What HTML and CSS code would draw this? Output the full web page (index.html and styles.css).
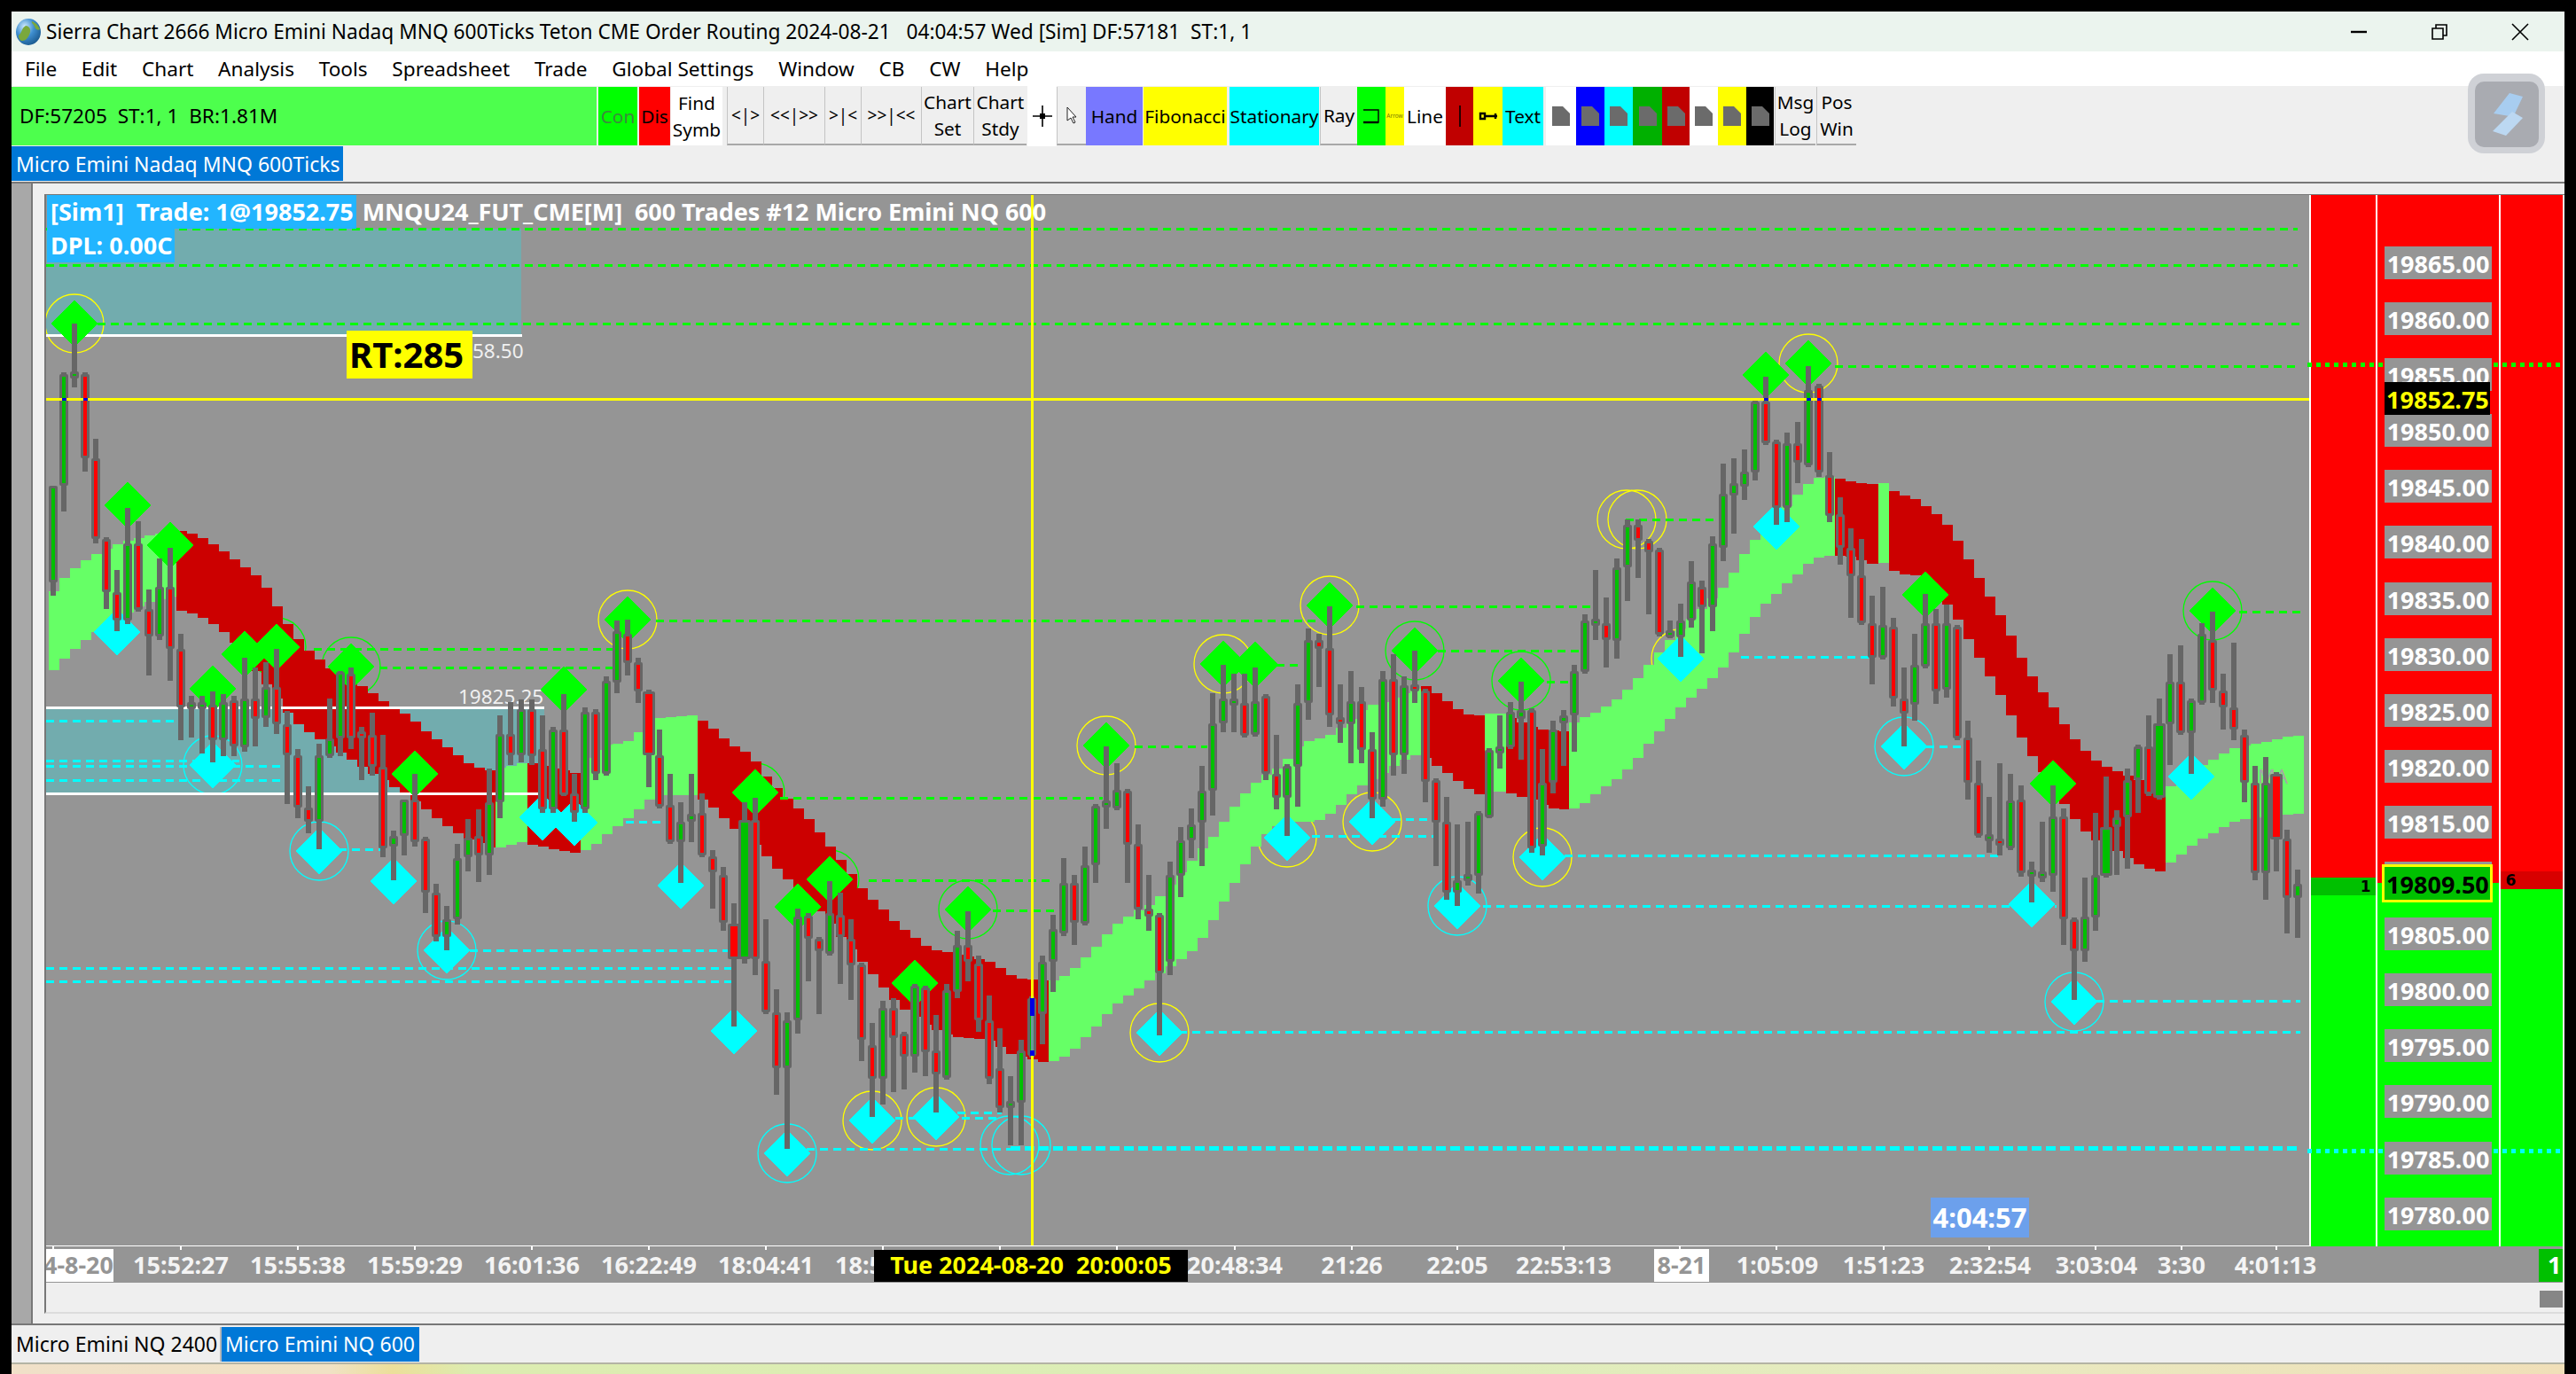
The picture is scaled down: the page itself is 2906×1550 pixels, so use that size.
FILE: index.html
```html
<!DOCTYPE html>
<html lang="en">
<head>
<meta charset="utf-8">
<title>Sierra Chart</title>
<link rel="stylesheet" href="styles.css">
</head>
<body>
<div class="app">
  <header class="title">
    <svg class="globe" viewBox="0 0 30 32"><defs><radialGradient id="gl" cx="35%" cy="30%" r="75%"><stop offset="0" stop-color="#cfeaff"/><stop offset=".5" stop-color="#3f8fd0"/><stop offset="1" stop-color="#1b5a90"/></radialGradient></defs><ellipse cx="15" cy="16" rx="14" ry="15" fill="url(#gl)"/><path d="M4 20c4-3 3-8 8-11 3 0 6 3 5 7-1 5-5 11-10 10-2-1-3-3-3-6zM19 4c3 1 7 4 9 9-2 2-5 0-6-3s-4-4-3-6z" fill="#7aa83c"/></svg>
    <span class="title-text">Sierra Chart 2666 Micro Emini Nadaq MNQ 600Ticks Teton CME Order Routing 2024-08-21   04:04:57 Wed [Sim] DF:57181  ST:1, 1</span>
    <div class="win">
      <svg class="win-ico" viewBox="0 0 20 20"><path d="M1 10h18" class="ink2"/></svg>
      <svg class="win-ico" viewBox="0 0 20 20"><path d="M2 6h12v12H2zM6 6V2h12v12h-4" class="ink1"/></svg>
      <svg class="win-ico" viewBox="0 0 20 20"><path d="M1 1l18 18M19 1L1 19" class="ink1"/></svg>
    </div>
  </header>

  <nav class="menu">
    <span>File</span><span>Edit</span><span>Chart</span><span>Analysis</span><span>Tools</span><span>Spreadsheet</span><span>Trade</span><span>Global Settings</span><span>Window</span><span>CB</span><span>CW</span><span>Help</span>
  </nav>

  <div class="toolbar">
    <div class="status">DF:57205  ST:1, 1  BR:1.81M</div>
    <div class="btn w44 ml2 green dim">Con</div>
    <div class="btn w35 ml2 red">Dis</div>
    <div class="btn w58 ml1 white two">Find<br>Symb</div>
    <div class="btn w41 ml5 bar nav">&lt;|&gt;</div>
    <div class="btn w69 bar nav">&lt;&lt;|&gt;&gt;</div>
    <div class="btn w41 bar nav">&gt;|&lt;</div>
    <div class="btn w68 bar nav">&gt;&gt;|&lt;&lt;</div>
    <div class="btn w59 bar two">Chart<br>Set</div>
    <div class="btn w60 bar two">Chart<br>Stdy</div>
    <div class="btn w33 ml1 white tall"><svg class="ico" viewBox="0 0 24 24"><path d="M12 0v24M1 12h22" class="ink1"/><rect x="9" y="9" width="6" height="6" class="fill-ink"/></svg></div>
    <div class="btn w33 bar"><svg class="ico-sm" viewBox="0 0 12 20"><path d="M1 1v15l4-3 3 6 2-1-3-6h4z" class="outline"/></svg></div>
    <div class="btn w64 violet">Hand</div>
    <div class="btn w94 ml1 yellow">Fibonacci</div>
    <div class="btn w101 ml3 cyan">Stationary</div>
    <div class="btn w42 ml1 bar">Ray</div>
    <div class="btn w32 green"><svg class="ico" viewBox="0 0 24 24"><path d="M3 5h17v14H3" class="ink1-open"/><path d="M3 19h17" class="ink2"/></svg></div>
    <div class="btn w21 yellow tiny">Arrow</div>
    <div class="btn w47 white">Line</div>
    <div class="btn w31 dred"><svg class="ico" viewBox="0 0 24 24"><path d="M12 0v24" class="ink1"/></svg></div>
    <div class="btn w33 yellow"><svg class="ico" viewBox="0 0 24 24"><path d="M8 12h14M3 9h5v6H3zM20 9v6" class="ink2"/></svg></div>
    <div class="btn w46 cyan">Text</div>
    <div class="btn w34 ml3 white"><svg class="doc" viewBox="0 0 20 22"><path d="M0 0h12l8 8v14H0z"/></svg></div>
    <div class="btn w32 blue"><svg class="doc" viewBox="0 0 20 22"><path d="M0 0h12l8 8v14H0z"/></svg></div>
    <div class="btn w32 cyan"><svg class="doc" viewBox="0 0 20 22"><path d="M0 0h12l8 8v14H0z"/></svg></div>
    <div class="btn w33 dgreen"><svg class="doc" viewBox="0 0 20 22"><path d="M0 0h12l8 8v14H0z"/></svg></div>
    <div class="btn w31 dred"><svg class="doc" viewBox="0 0 20 22"><path d="M0 0h12l8 8v14H0z"/></svg></div>
    <div class="btn w32 white"><svg class="doc" viewBox="0 0 20 22"><path d="M0 0h12l8 8v14H0z"/></svg></div>
    <div class="btn w32 yellow"><svg class="doc" viewBox="0 0 20 22"><path d="M0 0h12l8 8v14H0z"/></svg></div>
    <div class="btn w31 black"><svg class="doc" viewBox="0 0 20 22"><path d="M0 0h12l8 8v14H0z"/></svg></div>
    <div class="btn w46 ml1 bar two">Msg<br>Log</div>
    <div class="btn w45 ml1 bar two">Pos<br>Win</div>
  </div>

  <div class="tabs"><span class="tab-on">Micro Emini Nadaq MNQ 600Ticks</span></div>

  <section class="work">
    <div class="strip"></div>
    <div class="inner">
      <div class="frame">
        <div class="plot-row">
          <div class="plot">
            <svg id="chart" class="chart-svg" width="2553" height="1186" viewBox="52 220 2553 1186"></svg>
            <div class="head">
              <div class="head-row"><span class="tag">[Sim1]  Trade: 1@19852.75</span><span class="plain"> MNQU24_FUT_CME[M]  600 Trades #12 Micro Emini NQ 600</span></div>
              <div class="head-row"><span class="tag">DPL: 0.00C</span></div>
            </div>
            <div class="rt">RT:285</div>
            <div class="clock">4:04:57</div>
          </div>
          <div class="ladder">
            <div class="dots dots-g"></div>
            <div class="dots dots-c"></div>
            <div class="col col-l"><span class="qty-b">1</span></div>
            <div class="col col-m">
              <div class="px">19865.00</div><div class="px">19860.00</div><div class="px">19855.00</div><div class="px">19850.00</div><div class="px">19845.00</div><div class="px">19840.00</div><div class="px">19835.00</div><div class="px">19830.00</div><div class="px">19825.00</div><div class="px">19820.00</div><div class="px">19815.00</div><div class="px">19810.00</div><div class="px">19805.00</div><div class="px">19800.00</div><div class="px">19795.00</div><div class="px">19790.00</div><div class="px">19785.00</div><div class="px">19780.00</div>
              <div class="px-last">19852.75</div>
              <div class="px-cur">19809.50</div>
            </div>
            <div class="col col-r"><span class="qty-a">6</span></div>
          </div>
        </div>
        <div class="axis">
          <svg id="axis" class="axis-svg" width="2839" height="41" viewBox="52 1406 2839 41"></svg>
        </div>
        <div class="scroll"><div class="thumb"></div></div>
      </div>
    </div>
  </section>

  <div class="sheets"><span class="sheet">Micro Emini NQ 2400</span><span class="sheet sheet-on">Micro Emini NQ 600</span></div>
  <div class="wall"></div>

  <svg class="logo" viewBox="0 0 87 90"><rect width="87" height="90" rx="18" class="logo-o"/><rect x="8" y="9" width="72" height="74" rx="10" class="logo-i"/><path d="M47 22l15 4-9 19-6 3-18-3z" class="logo-a"/><path d="M50 43l12 7-19 20-15-5z" class="logo-b"/></svg>
</div>
<script src="chart.js"></script>
</body>
</html>
```
FILE: styles.css
```css
html,body{margin:0;height:100%;background:#000;overflow:hidden}
body{font-family:"Noto Sans","Open Sans",sans-serif;font-size:23px;color:#000}
.app{position:relative;margin:13px 0 0 13px;width:2880px;height:1537px;display:flex;flex-direction:column;background:#efefef;overflow:hidden}

.title{height:45px;flex:none;background:#ebf4ee;display:flex;align-items:center;padding-left:4px;white-space:pre}
.globe{width:30px;height:32px;flex:none}
.title-text{margin-left:5px;font-size:22.7px}
.win{margin-left:auto;display:flex;gap:71px;margin-right:40px}
.win-ico{width:20px;height:20px}
.ink1{fill:none;stroke:#000;stroke-width:1.6}
.ink1-open{fill:none;stroke:#000;stroke-width:1.4}
.ink2{fill:none;stroke:#000;stroke-width:2.4}
.fill-ink{fill:#000}
.outline{fill:#fff;stroke:#222;stroke-width:1}

.menu{height:39px;flex:none;background:#fff;display:flex;align-items:center;gap:27.7px;padding-left:15px;font-size:22.6px}

.toolbar{height:68px;flex:none;display:flex;align-items:stretch;padding:1px 0 1px;white-space:pre;font-size:20.8px;line-height:30px;box-sizing:border-box}
.status{width:660px;background:#4dff4d;display:flex;align-items:center;padding-left:9px;box-sizing:border-box;font-size:22.6px}
.btn{flex:none;display:flex;align-items:center;justify-content:center;text-align:center;box-sizing:border-box;overflow:hidden}
.two{line-height:30px}
.nav{font-size:19px}
.bar{background:#efefef;border-left:1px solid #c4c4c4;border-bottom:2px solid #a8a8a8}
.green{background:#0f0}.red{background:#f00}.white{background:#fff}.yellow{background:#ff0}.cyan{background:#0ff}
.violet{background:#7878ff}.dred{background:#c00000}.blue{background:#00f}.dgreen{background:#00b000}.black{background:#000}
.dim{color:#3c8a3c}
.tall{margin-top:-1px;margin-bottom:-1px}
.tiny{font-size:6.5px;color:#7a7a00}
.ico{width:24px;height:24px}
.ico-sm{width:12px;height:20px}
.doc{width:20px;height:22px;fill:#6b6b6b}
.ml1{margin-left:1px}.ml2{margin-left:2px}.ml3{margin-left:3px}.ml5{margin-left:5px}
.w21{width:21px}.w31{width:31px}.w32{width:32px}.w33{width:33px}.w34{width:34px}.w35{width:35px}.w41{width:41px}.w42{width:42px}.w44{width:44px}.w45{width:45px}.w46{width:46px}.w47{width:47px}.w58{width:58px}.w59{width:59px}.w60{width:60px}.w64{width:64px}.w68{width:68px}.w69{width:69px}.w94{width:94px}.w101{width:101px}

.tabs{height:40px;flex:none;display:flex;font-size:23px}
.tab-on{background:#0078d7;color:#fff;width:374px;height:39px;display:flex;align-items:center;padding-left:5px;box-sizing:border-box;white-space:nowrap}

.work{height:1290px;flex:none;display:flex;border-top:2px solid #777;border-bottom:2px solid #777;box-sizing:border-box}
.strip{width:24px;flex:none;background:#a8a8a8;border-right:2px solid #777;box-sizing:border-box}
.inner{flex:1;padding:12px 0 0 13px;display:flex;flex-direction:column;min-width:0}
.frame{border-left:2px solid #777;border-top:1px solid #777;border-bottom:2px solid #dcdcdc;height:1263px;display:flex;flex-direction:column;box-sizing:border-box;position:relative}

.plot-row{display:flex;height:1186px;flex:none}
.plot{position:relative;width:2553px;height:1186px;flex:none;overflow:hidden;background:#959595}
.chart-svg{display:block}

.head{position:absolute;left:1px;top:0;display:flex;flex-direction:column;font-weight:700;font-size:27px;color:#fff;line-height:38px}
.head-row{display:flex;height:38px;white-space:pre}
.tag{background:#22b5ff;padding:0 3px 0 4px}
.plain{color:#fff;letter-spacing:-.06px}
.rt{position:absolute;left:339px;top:153px;width:142px;height:54px;background:#ff0;font-weight:700;font-size:40px;line-height:54px;padding-left:3px;box-sizing:border-box;overflow:hidden}
.clock{position:absolute;left:2126px;top:1131px;width:111px;height:45px;background:#6ca0ec;color:#fff;font-weight:700;font-size:31px;line-height:45px;text-align:center}

.ladder{position:relative;display:flex;gap:2px;width:286px;flex:none;background:#fff;padding-left:2px;box-sizing:border-box;height:1186px}
.col{position:relative}
.col-l{width:74px;background:linear-gradient(#f00 0 770px,#00c000 770px 790px,#0f0 790px)}
.col-m{width:137px;background:linear-gradient(#f00 0 776px,#0f0 776px);display:flex;flex-direction:column;align-items:center;gap:26.1px;padding-top:58px;box-sizing:border-box}
.col-r{width:71px;background:linear-gradient(#f00 0 763px,#d80000 763px 783px,#0f0 783px)}
.px{position:relative;z-index:2;width:121px;height:37px;flex:none;background:#959595;color:#fff;font-weight:700;font-size:27px;line-height:39px;text-align:center}
.px-last{position:absolute;z-index:3;left:8px;top:211px;width:119px;height:37px;background:#000;color:#ff0;font-weight:700;font-size:27px;line-height:39px;text-align:center}
.px-cur{position:absolute;z-index:3;left:5px;top:755px;width:125px;height:43px;background:#00c000;border:3px solid #ff0;box-sizing:border-box;color:#000;font-weight:700;font-size:27px;line-height:39px;text-align:center}
.qty-b{position:absolute;right:6px;top:772px;font:700 17px/16px "DejaVu Sans",sans-serif}
.qty-a{position:absolute;left:6px;top:765px;font:700 17px/16px "DejaVu Sans",sans-serif}
.dots{position:absolute;z-index:1;left:-2px;width:285px;height:5px}
.dots-g{top:189px;background:repeating-linear-gradient(90deg,#0f0 0 5px,transparent 5px 10px)}
.dots-c{top:1076px;background:repeating-linear-gradient(90deg,#0ff 0 5px,transparent 5px 10px)}

.axis{height:41px;flex:none;background:#959595;width:2839px}
.axis-svg{display:block}
.scroll{height:34px;flex:none;position:relative}
.thumb{position:absolute;right:2px;top:9px;width:26px;height:19px;background:#868686}

.sheets{height:42px;flex:none;display:flex;align-items:center;font-size:23px;white-space:nowrap}
.sheet{height:39px;display:flex;align-items:center;box-sizing:border-box}
.sheets .sheet:first-child{width:237px;padding-left:5px;border-right:2px solid #b8b8b8}
.sheet-on{background:#0078d7;color:#fff;width:223px;padding-left:4px}
.wall{flex:1;border-top:2px solid #b4b4a4;background:linear-gradient(90deg,#f0e0c8 0,#f0e2c4 360px,#ecdf9a 430px,#dcecb0 520px,#dceeb8 1500px,#e8eac0 2200px,#f0dfb8 2880px)}

.logo{position:absolute;left:2771px;top:70px;width:87px;height:90px}
.logo-o{fill:#cfd1d6}.logo-i{fill:#a9abb1}.logo-a{fill:#a8cdf0}.logo-b{fill:#bcd8f2}

/* chart */
.sv{shape-rendering:crispEdges}
.teal{fill:#72acae}
.wl{fill:#fff}
.bl{fill:#66ff66}.bd{fill:#cc0000}
.dg,.dc,.dct{fill:none;stroke-dasharray:9 6;shape-rendering:crispEdges}
.dg{stroke:#0f0;stroke-width:3}
.dc{stroke:#0ff;stroke-width:3}
.dct{stroke:#0ff;stroke-width:5;stroke-dasharray:11 5}
.ry,.rg,.rc{fill:none;stroke-width:1.3}
.ry{stroke:#ff0}.rg{stroke:#0f0}.rc{stroke:#0ff}
.mg{fill:#0f0}.mc{fill:#0ff}
.wick{fill:#666}
.cr{fill:#f00}.cg{fill:#00c000}
.hair{fill:#ff0}
.xb{fill:#0000e0}.xt{fill:#6a9a9a}
.ctxt{font-family:"Noto Sans","Open Sans",sans-serif;font-size:22.5px;fill:#f0f0f0;white-space:pre}
.ma{font-family:"Noto Sans",sans-serif;font-size:22px;fill:#a6a6a6}
.atxt{font-family:"Noto Sans","Open Sans",sans-serif;font-weight:700;font-size:27px;fill:#f4f4f4;text-anchor:middle;white-space:pre}
.adate{fill:#959595}
.ayel{fill:#ff0}
.axbg{fill:#fff}
.axblk{fill:#000}
.axgrn{fill:#00c000}
.at1{fill:#fff;text-anchor:start}
.aend{text-anchor:end}
.astart{text-anchor:start}
```
FILE: chart.js
```js
var BARS = `60 548 548 657 672 g
72 420 422 548 577 g
84 365 422 424 437 g
96 420 422 517 532 r
108 495 517 608 613 r
120 606 608 668 687 r
132 643 668 700 712 r
144 573 613 700 704 g
156 588 613 688 690 r
168 665 687 718 762 r
180 630 662 718 722 g
192 618 662 732 768 r
204 715 732 798 835 r
216 785 794 797 832 g
228 785 794 797 850 g
240 780 795 835 860 r
252 783 792 835 853 g
264 785 790 842 853 r
276 742 788 843 848 g
288 753 788 811 842 r
300 747 775 810 820 g
312 732 775 817 828 r
324 802 817 852 907 r
336 845 852 911 923 r
348 887 911 927 940 r
360 839 852 927 958 g
372 788 833 853 855 g
384 757 758 833 853 g
396 753 760 833 845 r
408 820 827 830 880 r
420 804 829 865 875 r
432 829 865 957 967 r
444 937 943 955 993 g
456 902 902 943 965 g
468 873 902 950 955 r
480 944 946 1007 1030 r
492 997 1007 1057 1062 r
504 1022 1037 1057 1072 g
516 952 968 1037 1043 g
528 924 945 967 983 g
540 913 943 965 995 r
552 867 905 965 987 g
564 807 828 905 923 g
576 792 828 852 863 r
588 789 800 852 860 g
600 789 800 853 863 r
612 807 845 913 917 r
624 820 823 913 917 g
636 783 823 897 898 r
648 873 895 917 927 r
660 798 803 913 917 g
672 800 803 873 880 r
684 763 768 873 875 g
696 700 712 770 782 g
708 699 715 748 762 r
720 742 747 780 793 r
732 778 780 852 888 R
744 823 852 910 912 r
756 873 908 950 952 r
768 905 927 950 996 g
780 873 918 927 950 g
792 895 917 965 967 r
804 959 966 984 1025 r
816 978 987 1041 1050 r
828 1019 1042 1082 1158 R
840 905 925 1082 1087 G
852 900 925 1082 1100 r
864 1037 1084 1142 1144 r
876 1116 1142 1205 1235 r
888 1142 1151 1205 1296 g
900 1025 1034 1151 1166 g
912 1030 1033 1059 1107 r
924 1057 1059 1073 1144 r
936 994 1030 1076 1078 g
948 1007 1032 1057 1110 r
960 1037 1059 1089 1128 r
972 1086 1088 1173 1197 r
984 1154 1179 1217 1260 r
996 1129 1137 1217 1246 g
1008 1126 1137 1171 1232 r
1020 1164 1166 1192 1229 r
1032 1110 1112 1192 1210 g
1044 1112 1114 1187 1214 r
1056 1145 1185 1212 1255 r
1068 1110 1117 1216 1218 g
1080 1050 1066 1119 1126 g
1092 1028 1066 1085 1107 r
1104 1078 1087 1151 1164 r
1116 1123 1151 1217 1223 r
1128 1160 1205 1250 1255 r
1140 1214 1243 1249 1292 g
1152 1173 1185 1244 1292 g
1164 1124 1126 1191 1193 g
1176 1078 1085 1144 1178 g
1188 1032 1048 1085 1119 g
1200 968 996 1053 1056 g
1212 987 996 1041 1066 r
1224 955 976 1042 1044 g
1236 907 909 976 996 g
1248 842 904 910 935 g
1260 861 891 912 914 g
1272 890 892 953 996 r
1284 930 952 1026 1037 r
1296 987 1025 1034 1050 r
1308 1030 1032 1098 1168 r
1320 972 987 1085 1100 g
1332 933 948 988 1012 g
1344 912 930 948 968 g
1356 864 892 928 977 g
1368 782 816 892 920 g
1380 750 788 816 826 g
1392 760 788 796 826 g
1404 760 793 830 832 r
1416 753 791 829 831 g
1428 783 785 873 880 r
1440 829 873 900 913 r
1452 862 864 900 943 g
1464 772 793 865 910 g
1476 709 722 793 812 g
1488 715 722 732 775 r
1500 684 731 807 820 r
1512 772 809 817 838 r
1524 757 791 817 861 g
1536 775 791 846 861 r
1548 826 845 902 923 r
1560 757 766 902 910 g
1572 738 766 852 875 r
1584 763 773 852 873 g
1596 734 773 779 793 r
1608 777 779 882 905 r
1620 878 880 928 977 r
1632 899 927 1007 1015 r
1644 930 993 1007 1022 g
1656 927 986 994 999 g
1668 915 917 988 1008 g
1680 844 846 922 923 g
1692 807 843 848 867 g
1704 792 803 843 845 g
1716 769 801 811 857 g
1728 799 801 957 962 r
1740 845 883 955 965 g
1752 813 823 883 895 g
1764 801 807 816 864 g
1776 750 757 807 848 g
1788 693 700 758 760 g
1800 643 698 706 722 g
1812 674 703 722 753 r
1824 630 640 723 743 g
1836 586 592 640 678 g
1848 586 592 610 652 r
1860 608 610 623 693 r
1872 618 620 716 718 r
1884 700 711 719 720 g
1896 681 700 719 741 g
1908 633 656 700 708 g
1920 655 662 685 737 r
1932 605 613 685 712 g
1944 523 557 618 633 g
1956 517 545 559 602 g
1968 507 532 549 564 g
1980 451 453 533 542 g
1992 425 453 500 502 r
2004 496 498 573 592 r
2016 488 500 573 589 g
2028 476 500 522 545 r
2040 413 440 525 527 g
2052 433 435 533 538 r
2064 510 536 582 589 r
2076 561 580 618 637 r
2088 596 618 650 697 r
2100 608 649 703 705 r
2112 672 703 742 772 r
2124 662 705 742 744 g
2136 697 707 788 797 r
2148 753 788 805 842 r
2160 715 750 795 813 g
2172 670 703 752 754 g
2184 687 703 780 794 r
2196 682 703 778 787 g
2208 705 707 833 835 r
2220 813 832 883 902 r
2232 858 883 943 945 r
2244 899 941 949 962 g
2256 861 946 953 965 r
2268 873 903 957 959 g
2280 886 902 985 989 r
2292 972 981 989 1018 g
2304 927 983 991 995 g
2316 886 921 988 1006 g
2328 912 921 1037 1066 r
2340 1035 1037 1073 1128 r
2352 990 1034 1073 1085 g
2364 917 987 1035 1050 g
2376 876 933 988 990 G
2388 914 922 933 987 g
2400 867 880 922 980 g
2412 840 842 880 917 g
2424 807 842 896 898 r
2436 788 816 900 902 G
2448 738 769 817 863 g
2460 728 769 827 829 r
2472 788 790 827 873 g
2484 703 715 793 795 g
2496 690 722 779 793 r
2508 760 779 798 823 r
2520 725 798 823 835 r
2532 823 829 883 905 r
2544 864 883 985 993 r
2556 854 883 985 1015 g
2568 871 873 947 983 R
2580 936 946 1013 1053 r
2592 981 997 1013 1058 g`;

// indicator band: [class, x0, x1, top points, bottom points]
var BAND = [
["bl",55,199,[55,678,66,658,79,647,92,635,105,627,128,615,163,605,199,598],[55,762,67,749,79,737,91,726,104,717,128,700,165,680,199,672]],
["bd",199,559,[199,598,223,603,247,618,271,635,295,653,307,673,319,695,332,715,344,730,368,750,379,758,415,777,439,795,463,808,487,830,512,848,535,865,559,870],[199,688,223,693,247,708,259,717,331,812,344,822,355,830,440,885,474,907,499,928,525,945,559,958]],
["bl",559,595,[559,867,595,860],[559,958,595,948]],
["bd",595,655,[595,860,655,873],[595,952,655,963]],
["bl",655,787,[655,860,680,840,706,838,720,827,741,810,787,806],[655,960,667,957,678,947,690,937,703,928,715,918,727,907,739,897,787,897]],
["bd",787,1183,[787,808,811,826,823,840,835,844,847,851,859,867,871,884,883,894,895,907,907,916,919,931,931,947,943,962,955,978,967,994,979,1010,991,1019,1003,1032,1015,1045,1027,1053,1039,1063,1051,1071,1063,1073,1111,1083,1123,1087,1135,1097,1147,1103,1183,1107],[787,898,800,907,811,916,823,930,859,957,871,975,883,985,895,998,907,1009,919,1021,1015,1135,1027,1142,1051,1160,1075,1169,1099,1171,1123,1175,1135,1187,1159,1194,1183,1199]],
["bl",1183,1603,[1183,1109,1195,1103,1207,1098,1219,1086,1231,1074,1243,1061,1255,1046,1267,1038,1279,1030,1303,1018,1375,937,1387,917,1399,902,1411,887,1423,878,1448,863,1459,847,1471,837,1495,832,1508,825,1532,805,1542,797,1559,793,1603,775],[1183,1199,1195,1194,1207,1189,1219,1176,1231,1164,1243,1151,1255,1137,1267,1126,1279,1119,1291,1110,1350,1070,1363,1048,1375,1027,1387,1007,1399,985,1411,965,1423,945,1448,927,1484,927,1495,923,1519,903,1530,890,1589,855,1603,850]],
["bd",1603,1675,[1603,770,1615,777,1627,787,1639,795,1651,805,1675,807],[1603,850,1615,860,1627,867,1639,877,1651,885,1663,895,1675,897]],
["bl",1675,1699,[1675,805,1699,805],[1675,893,1699,893]],
["bd",1699,1770,[1699,807,1735,823,1770,825],[1699,893,1711,897,1735,903,1747,912,1770,913]],
["bl",1770,2070,[1770,820,1783,810,1795,807,1807,800,1819,793,1831,783,1843,771,1855,756,1867,742,1879,727,1939,668,1951,655,1963,634,1975,613,1987,603,2023,563,2035,550,2047,540,2059,538,2070,538],[1770,913,1783,910,1795,900,1807,890,1819,883,1831,873,1843,862,1855,845,1867,830,1879,817,1891,803,1903,790,1915,782,1927,770,1939,758,1951,745,1963,723,1975,703,1987,685,1999,675,2011,662,2023,653,2035,640,2047,630,2059,627,2070,627]],
["bd",2070,2119,[2070,539,2082,541,2094,545,2119,546],[2070,627,2094,628,2106,636,2119,636]],
["bl",2119,2131,[2119,545,2131,545],[2119,635,2131,635]],
["bd",2131,2443,[2131,550,2143,557,2155,560,2167,565,2179,576,2191,584,2203,599,2215,620,2227,642,2239,661,2251,684,2263,703,2275,730,2287,753,2299,773,2311,788,2323,807,2335,826,2347,841,2360,855,2371,862,2384,868,2396,873,2412,880,2443,890],[2131,640,2143,647,2167,650,2203,688,2227,732,2239,751,2251,774,2263,793,2275,820,2287,843,2299,863,2311,878,2323,897,2335,916,2347,931,2359,945,2384,958,2395,963,2407,972,2419,977,2431,983,2443,983]],
["bl",2443,2599,[2443,890,2455,883,2467,875,2491,859,2503,854,2515,846,2537,840,2551,838,2563,835,2575,832,2599,829],[2443,977,2455,969,2467,958,2479,949,2491,943,2503,936,2515,929,2539,922,2575,919,2599,918]]
];

// horizontal dashed levels: [y, x0, x1]
var GREEN = [[258,52,2592],[299,52,2592],[365,110,2595],[413,2070,2595],[700,740,1490],[586,1834,1938],[684,1530,1800],[750,1440,1470],[734,1622,1783],[769,1745,1775],[842,1280,1362],[732,354,693],[753,428,695],[900,880,1244],[993,980,1190],[1027,1120,1190],[690,2526,2595]];
var CYAN = [[813,52,200],[858,52,270],[864,52,320],[880,52,320],[927,706,752],[958,382,430],[1072,530,823],[1092,52,825],[1107,52,825],[1296,910,1140],[1261,1010,1130],[1255,1080,1130],[943,1480,1617],[924,1571,1617],[965,1765,2258],[741,1964,2110],[842,2173,2215],[1022,1673,2320],[1129,2365,2595],[1164,1330,2595]];

// diamonds: [x, y, ring]  (y/g/c ring colour, "" = none)
var GD = [[84,365,"y"],[144,570,""],[192,615,""],[708,699,"y"],[240,777,""],[276,738,""],[312,730,"g"],[396,752,"g"],[468,873,""],[636,778,""],[852,894,"g"],[936,992,"g"],[900,1023,""],[1032,1109,""],[1092,1026,"g"],[1248,841,"y"],[1380,749,"y"],[1416,750,""],[1596,734,"g"],[1716,768,"g"],[1500,683,"y"],[1992,423,""],[2040,410,"y"],[2172,671,""],[2316,884,""],[2496,689,"g"]];
var CD = [[132,713,""],[240,863,"c"],[360,960,"c"],[444,994,""],[504,1072,"c"],[612,922,""],[648,928,""],[768,999,""],[828,1163,""],[888,1301,"c"],[984,1264,"y"],[1056,1260,"y"],[1308,1165,"y"],[1452,945,"y"],[1548,927,"y"],[1644,1022,"c"],[1740,967,"y"],[1896,743,"y"],[2004,594,""],[2148,842,"c"],[2292,1020,""],[2340,1130,"c"],[2472,876,""]];
var RINGS = [[1835,586,"y"],[1847,586,"y"],[1139,1292,"c"],[1152,1292,"c"]];

function rect(c,x,y,w,h,extra){return '<rect class="'+c+'" x="'+x+'" y="'+y+'" width="'+w+'" height="'+h+'"'+(extra||'')+'/>';}
function interp(p,x){
  if(x<=p[0])return p[1];
  for(var i=2;i<p.length;i+=2){
    if(x<=p[i]){return p[i-1]+(p[i+1]-p[i-1])*(x-p[i-2])/(p[i]-p[i-2]);}
  }
  return p[p.length-1];
}
function dash(c,l){return '<path class="'+c+'" d="M'+l[1]+' '+l[0]+'H'+l[2]+'"/>';}
function diamond(c,d){var x=d[0],y=d[1];return '<polygon class="sv '+c+'" points="'+(x-27)+','+y+' '+x+','+(y-26)+' '+(x+27)+','+y+' '+x+','+(y+26)+'"/>';}
function ring(d){return d[2]?'<circle class="r'+d[2]+'" cx="'+d[0]+'" cy="'+d[1]+'" r="33"/>':'';}

var s='';
s+=rect('sv teal',52,258,536,120);
s+=rect('sv teal',52,800,562,94);
GD.concat(CD,RINGS).forEach(function(d){s+=ring(d);});
BAND.forEach(function(b){
  for(var x=b[1];x<b[2];x+=12){
    var mid=x+6,t=Math.round(interp(b[3],mid)),o=Math.round(interp(b[4],mid));
    s+=rect('sv '+b[0],x,t,Math.min(12,b[2]-x),o-t);
  }
});
s+=rect('sv wl',52,377,537,3);
s+=rect('sv wl',52,797,562,3);
s+=rect('sv wl',52,894,562,3);
GREEN.forEach(function(l){s+=dash('dg',l);});
CYAN.forEach(function(l){s+=dash('dc',l);});
s+=dash('dct',[1295,1140,2595]);
s+='<text class="ctxt" x="517" y="794">19825.25</text>';
s+='<text class="ctxt" x="533" y="404">58.50</text>';
s+='<text class="ma" x="2547" y="884">MA</text>';
GD.forEach(function(d){s+=diamond('mg',d);});
CD.forEach(function(d){s+=diamond('mc',d);});
BARS.split('\n').forEach(function(line){
  var p=line.trim().split(' '),x=+p[0],h=+p[1],t=+p[2],b=+p[3],l=+p[4],k=p[5];
  var wide=(k==='R'||k==='G'),red=(k==='r'||k==='R');
  var ow=wide?14:10,cw=wide?8:4;
  if(b-t<8){var c=(b+t)/2;t=Math.round(c-4);b=t+8;}
  s+=rect('sv wick',x-3,h,6,l-h);
  s+=rect('wick',x-ow/2,t,ow,b-t,' rx="2"');
  s+=rect('sv '+(red?'cr':'cg'),x-cw/2,t+3,cw,b-t-6);
});
s+=rect('sv hair',52,449,2553,3);
[72,96,1992,2040,2052].forEach(function(x){s+=rect('sv xb',x-2,449,5,3);});
s+=rect('sv hair',1163,220,3,1186);
s+=rect('sv xt',1163,1146,3,39);
s+=rect('sv xb',1162,1126,5,20);
s+=rect('sv xb',1162,1185,5,6);
s+=rect('sv wl',52,1405,2553,1);
document.getElementById('chart').innerHTML=s;

// time axis
var LABELS=[[204,'15:52:27'],[336,'15:55:38'],[468,'15:59:29'],[600,'16:01:36'],[732,'16:22:49'],[864,'18:04:41'],[1393,'20:48:34'],[1525,'21:26'],[1644,'22:05'],[1764,'22:53:13'],[2005,'1:05:09'],[2125,'1:51:23'],[2245,'2:32:54'],[2365,'3:03:04'],[2461,'3:30'],[2567,'4:01:13']];
var TICKS=[60,204,336,468,600,732,864,996,1128,1260,1393,1525,1644,1764,1895,2004,2125,2244,2364,2461,2568];
var a='';
TICKS.forEach(function(x){a+=rect('sv wl',x-1,1406,2,4);});
a+=rect('sv axbg',52,1409,76,37);
a+='<text class="atxt adate aend" x="128" y="1437">2024-8-20</text>';
LABELS.forEach(function(l){a+='<text class="atxt" x="'+l[0]+'" y="1437">'+l[1]+'</text>';});
a+='<text class="atxt astart" x="942" y="1437">18:5</text>';
a+=rect('sv axblk',986,1410,354,36);
a+='<text class="atxt ayel" x="1163" y="1437">Tue 2024-08-20  20:00:05</text>';
a+=rect('sv axbg',1866,1409,62,37);
a+='<text class="atxt adate" x="1897" y="1437">8-21</text>';
a+=rect('sv axgrn',2864,1409,27,37);
a+='<text class="atxt at1" x="2874" y="1437">1</text>';
document.getElementById('axis').innerHTML=a;
```
